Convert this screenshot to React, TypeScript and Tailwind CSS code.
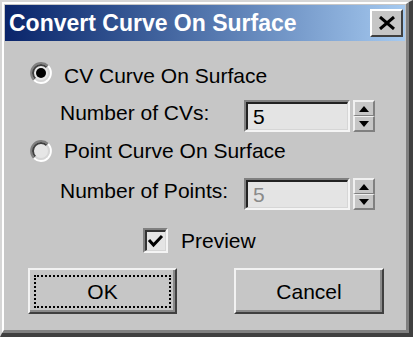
import React from "react";

const face = "bg-[#c6c6c6]";

const Radio = ({ checked }: { checked?: boolean }) => (
  <svg width="22" height="22" viewBox="0 0 22 22" className="shrink-0">
    <circle cx="11" cy="11" r="9" fill="#e6e6e6" />
    <path d="M3.93 18.07 A10 10 0 0 1 18.07 3.93" fill="none" stroke="#808080" strokeWidth="2" />
    <path d="M18.07 3.93 A10 10 0 0 1 3.93 18.07" fill="none" stroke="#ffffff" strokeWidth="2" />
    <path d="M5.34 16.66 A8 8 0 0 1 16.66 5.34" fill="none" stroke="#404040" strokeWidth="2" />
    <path d="M16.66 5.34 A8 8 0 0 1 5.34 16.66" fill="none" stroke="#d6d6d6" strokeWidth="2" />
    {checked && <circle cx="11" cy="11" r="5" fill="#000" />}
  </svg>
);

const Spinner = () => (
  <div className="flex h-full w-[22px] flex-col">
    <div className={`flex flex-1 items-center justify-center border-t-2 border-l-2 border-t-[#f0f0f0] border-l-[#f0f0f0] border-b border-r-2 border-b-[#808080] border-r-[#808080] ${face}`}>
      <svg width="10" height="6" viewBox="0 0 10 6">
        <path d="M5 0 L10 6 L0 6 Z" fill="#000" />
      </svg>
    </div>
    <div className={`flex flex-1 items-center justify-center border-t border-l-2 border-t-[#f0f0f0] border-l-[#f0f0f0] border-b-2 border-r-2 border-b-[#808080] border-r-[#808080] ${face}`}>
      <svg width="10" height="6" viewBox="0 0 10 6">
        <path d="M0 0 L10 0 L5 6 Z" fill="#000" />
      </svg>
    </div>
  </div>
);

const NumberField = ({ label, value, disabled }: { label: string; value: string; disabled?: boolean }) => (
  <div className="flex h-[32px] items-center pl-[55px]">
    <span className="mb-[6px] w-[184px] shrink-0 leading-[24px]">{label}</span>
    <div className="h-full w-[106px] border-t-2 border-l-2 border-t-[#808080] border-l-[#808080] border-b-2 border-r-2 border-b-[#f4f4f4] border-r-[#f4f4f4]">
      <div className="flex h-full items-center border-t-2 border-l-2 border-t-[#222] border-l-[#222] border-b border-r border-b-[#d6d6d6] border-r-[#d6d6d6] bg-[#e4e4e4] pl-[5px]">
        <span className={disabled ? "text-[#8a8a8a]" : "text-black"}>{value}</span>
      </div>
    </div>
    <div className="ml-[3px] h-full">
      <Spinner />
    </div>
  </div>
);

const Button = ({ children, focused }: { children: React.ReactNode; focused?: boolean }) => (
  <div className={`h-full border-t-2 border-l-2 border-t-[#f2f2f2] border-l-[#f2f2f2] border-b-2 border-r-2 border-b-[#404040] border-r-[#404040] ${face}`}>
    <div className="flex h-full items-center justify-center border-b-2 border-r-2 border-b-[#8a8a8a] border-r-[#8a8a8a] pt-[5px] pl-[4px] pr-[2px] pb-[2px]">
      <div className={`flex h-full w-full items-center justify-center ${focused ? "border-2 border-dotted border-black" : ""}`}>
        {children}
      </div>
    </div>
  </div>
);

export default function App() {
  return (
    <div className="h-[337px] w-[413px] border-t-2 border-l-2 border-t-[#d6d6d6] border-l-[#d6d6d6] border-b-4 border-r-4 border-b-[#404040] border-r-[#404040] font-['Liberation_Sans',Arial,sans-serif] text-[21px] text-black">
      <div className={`flex h-full flex-col border-t-2 border-l-2 border-white border-b-3 border-r-3 border-b-[#808080] border-r-[#808080] p-px ${face}`}>
        <div className="flex h-[36px] shrink-0 items-center justify-between bg-linear-to-r from-[#0a246a] to-[#a6caf0] pl-[4px] pr-[2px]">
          <span className="text-[23px] font-bold leading-none text-white">Convert Curve On Surface</span>
          <div className={`flex h-[28px] w-[33px] items-center justify-center border-t-2 border-l-2 border-t-white border-l-white border-b-2 border-r-2 border-b-[#404040] border-r-[#404040] ${face}`}>
            <svg width="18" height="14" viewBox="0 0 18 14">
              <path d="M2 1 L16 13 M16 1 L2 13" stroke="#000" strokeWidth="3" />
            </svg>
          </div>
        </div>

        <div className="flex flex-col">
          <div className="mt-[21px] flex h-[24px] items-start gap-[12px] pl-[25px]">
            <Radio checked />
            <span className="pt-[2px] leading-[24px]">CV Curve On Surface</span>
          </div>

          <div className="mt-[14px]">
            <NumberField label="Number of CVs:" value="5" />
          </div>

          <div className="mt-[7px] flex h-[24px] items-center gap-[12px] pl-[25px]">
            <Radio />
            <span className="leading-[24px]">Point Curve On Surface</span>
          </div>

          <div className="mt-[15px]">
            <NumberField label="Number of Points:" value="5" disabled />
          </div>

          <div className="mt-[18px] flex h-[25px] items-center gap-[13px] pl-[138px]">
            <div className="h-[25px] w-[25px] border-t-2 border-l-2 border-t-[#808080] border-l-[#808080] border-b-2 border-r-2 border-b-[#f4f4f4] border-r-[#f4f4f4]">
              <div className="h-full w-full border-t-2 border-l-2 border-t-[#333] border-l-[#333] border-b border-r border-b-[#d6d6d6] border-r-[#d6d6d6] bg-[#e4e4e4]">
                <svg width="18" height="18" viewBox="0 0 18 18">
                  <path d="M2 8 L6.5 13 L15 4" fill="none" stroke="#000" strokeWidth="3" />
                </svg>
              </div>
            </div>
            <span className="leading-[24px]">Preview</span>
          </div>

          <div className="mt-[15px] flex h-[46px] gap-[57px] pl-[23px]">
            <div className="w-[149px]">
              <Button focused>OK</Button>
            </div>
            <div className="w-[150px]">
              <Button>Cancel</Button>
            </div>
          </div>
        </div>
      </div>
    </div>
  );
}
